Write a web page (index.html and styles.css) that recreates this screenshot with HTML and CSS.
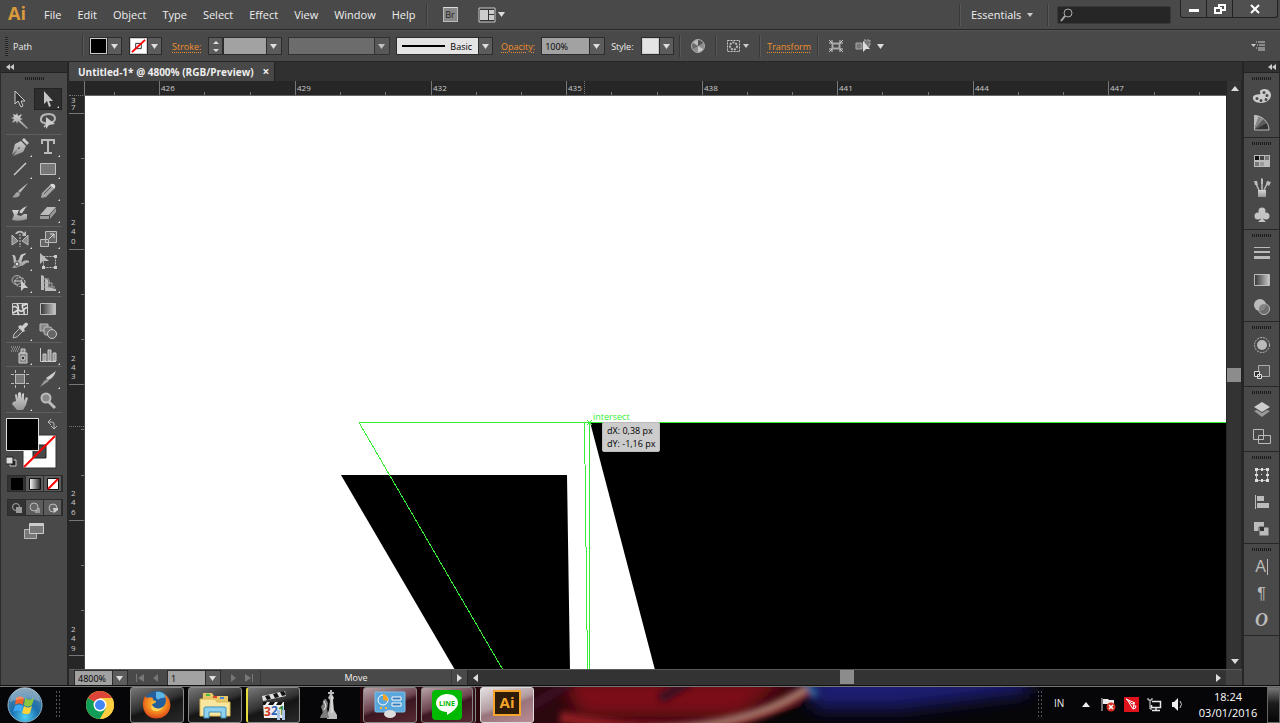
FILE: index.html
```html
<!DOCTYPE html>
<html lang="en">
<head>
    <meta charset="UTF-8">
    <meta name="viewport" content="width=device-width, initial-scale=1.0">
    <title>Untitled-1* @ 4800% (RGB/Preview)</title>
    <link rel="stylesheet" href="styles.css">
</head>
<body>
    <!-- shared gradients -->
    <svg class="defs" aria-hidden="true">
        <defs>
            <linearGradient id="metal" x1="0" y1="0" x2="0" y2="1"><stop offset="0" stop-color="#d6d6d6"/><stop offset="1" stop-color="#969696"/></linearGradient>
            <linearGradient id="fade"><stop offset="0" stop-color="#333"/><stop offset="1" stop-color="#ccc"/></linearGradient>
            <linearGradient id="fade-light"><stop offset="0" stop-color="#fff"/><stop offset="1" stop-color="#222"/></linearGradient>
            <radialGradient id="orb" cx=".5" cy=".85" r=".8"><stop offset="0" stop-color="#4fd0f5"/><stop offset=".5" stop-color="#1a6fae"/><stop offset="1" stop-color="#5a86a4"/></radialGradient>
            <radialGradient id="fox" cx=".5" cy=".4" r=".6"><stop offset="0" stop-color="#ffd23c"/><stop offset=".6" stop-color="#f5861f"/><stop offset="1" stop-color="#d9461a"/></radialGradient>
            <filter id="soft" x="-20%" y="-50%" width="140%" height="200%"><feGaussianBlur stdDeviation="3"/></filter>
            <filter id="softer" x="-30%" y="-100%" width="160%" height="300%"><feGaussianBlur stdDeviation="9"/></filter>
        </defs>
    </svg>

    <header class="menubar">
        <span class="logo">Ai</span>
        <nav class="menus">
            <button>File</button>
            <button>Edit</button>
            <button>Object</button>
            <button>Type</button>
            <button>Select</button>
            <button>Effect</button>
            <button>View</button>
            <button>Window</button>
            <button>Help</button>
        </nav>
        <i class="vsep"></i>
        <button class="bridge" aria-label="Bridge">Br</button>
        <button class="arrange" aria-label="Arrange documents">
            <svg width="28" height="16" viewBox="0 0 28 16"><path d="M1 1h16v14H1z" fill="#333" stroke="#ccc"/><path d="M2 3h8v10H2zM11 3h5v4h-5zM11 8h5v5h-5z" fill="#ccc"/><path d="M20 5h7l-3.500 5z" fill="#ddd"/></svg>
        </button>
        <span class="spacer"></span>
        <i class="vsep"></i>
        <select class="workspace-select" aria-label="Workspace"><option>Essentials</option></select>
        <i class="vsep"></i>
        <label class="search">
            <svg width="14" height="14" viewBox="0 0 14 14" fill="none" stroke="#aaa"><circle cx="8" cy="5" r="4"/><path d="M5 8l-4 5" stroke-width="2"/></svg>
            <input type="text" aria-label="Search">
        </label>
        <div class="window-buttons">
            <button aria-label="Minimize"><svg width="10" height="10" viewBox="0 0 10 10"><path d="M0 5h10v3H0z" fill="#fff"/></svg></button>
            <button aria-label="Restore"><svg width="12" height="10" viewBox="0 0 12 10" fill="none" stroke="#fff" stroke-width="2"><path d="M5 3V1h6v5H8M1 4h6v5H1z"/></svg></button>
            <button class="close" aria-label="Close"><svg width="10" height="10" viewBox="0 0 10 10" stroke="#fff" stroke-width="2"><path d="M1 1l8 8M9 1l-8 8"/></svg></button>
        </div>
    </header>

    <section class="control-bar">
        <i class="grip-v"></i>
        <span class="selection">Path</span>
        <i class="vsep"></i>
        <button class="swatch-combo" aria-label="Fill"><span class="swatch black"></span><span class="caret"></span></button>
        <button class="swatch-combo stroke-combo" aria-label="Stroke color">
            <svg class="swatch" viewBox="0 0 16 16" preserveAspectRatio="none"><path d="M0 0h16v16H0z" fill="#fff"/><path d="M5 5h6v6H5z" fill="none" stroke="#222"/><path d="M1 15L15 1" stroke="#f00" stroke-width="2"/></svg>
            <span class="caret"></span>
        </button>
        <a class="link stroke-link" href="#">Stroke:</a>
        <div class="stepper"><button aria-label="Increase"><i class="tri up"></i></button><button aria-label="Decrease"><i class="tri down"></i></button></div>
        <select class="combo weight" aria-label="Stroke weight"><option></option></select>
        <select class="combo profile" aria-label="Width profile" disabled><option></option></select>
        <button class="brush" aria-label="Brush definition"><i></i><span>Basic</span><span class="caret"></span></button>
        <a class="link" href="#">Opacity:</a>
        <select class="combo opacity" aria-label="Opacity"><option>100%</option></select>
        <span class="style-label">Style:</span>
        <button class="swatch-combo" aria-label="Graphic style"><span class="swatch light"></span><span class="caret"></span></button>
        <i class="vsep"></i>
        <button class="bar-icon" aria-label="Recolor artwork">
            <svg width="16" height="16" viewBox="0 0 16 16"><circle cx="8" cy="8" r="6.500" fill="#8d8d8d" stroke="#aaa"/><path d="M8 8V2a6 6 0 0 1 5 3z" fill="#555"/><path d="M8 8L3 5a6 6 0 0 1 5-3z" fill="#bbb"/><path d="M8 8l5 3a6 6 0 0 1-5 3z" fill="#ccc"/><path d="M8 8l-5 3a6 6 0 0 1 0-6z" fill="#6a6a6a"/></svg>
        </button>
        <i class="vsep"></i>
        <button class="bar-icon" aria-label="Align to selection">
            <svg width="24" height="16" viewBox="0 0 24 16"><path d="M1.500 2.500h12v11h-12z" fill="none" stroke="#ccc" stroke-dasharray="2 1"/><circle cx="7.500" cy="8" r="3.500" fill="none" stroke="#bbb" stroke-width="2" stroke-dasharray="2 1"/><path d="M17 6h6l-3 4z" fill="#ccc"/></svg>
        </button>
        <i class="vsep"></i>
        <a class="link" href="#">Transform</a>
        <i class="vsep"></i>
        <button class="bar-icon" aria-label="Isolate">
            <svg width="16" height="14" viewBox="0 0 16 14" fill="none" stroke="#ccc"><path d="M4.500 4.500h7v5h-7z" stroke-width="2" stroke="#aaa"/><path d="M1 1l3 3M15 1l-3 3M1 13l3-3M15 13l-3-3M1 4h3V1M15 4h-3V1M1 10h3v3M15 10h-3v3"/></svg>
        </button>
        <button class="bar-icon" aria-label="Select similar">
            <svg width="30" height="16" viewBox="0 0 30 16"><path d="M1 5h6v6H1z" fill="#777" stroke="#aaa"/><path d="M9 2h6v6H9z" fill="#777" stroke="#aaa" stroke-dasharray="2 1"/><path d="M8 3v11l3-3h4z" fill="#ddd"/><path d="M22 6h7l-3.500 5z" fill="#ddd"/></svg>
        </button>
        <span class="spacer"></span>
        <button class="bar-icon" aria-label="Panel menu">
            <svg width="14" height="10" viewBox="0 0 14 10"><path d="M0 3h5L2.500 6z" fill="#ccc"/><path d="M5 1h1M7 1h7M6 4h1M8 4h6M5 7h1M7 7h7M7 9h7" stroke="#ccc"/></svg>
        </button>
    </section>

    <main class="workspace">
        <aside class="tools">
            <button class="collapse" aria-label="Collapse"><svg width="8" height="6" viewBox="0 0 8 6"><path d="M4 0v6L0 3zM8 0v6L4 3z" fill="#ccc"/></svg></button>
            <i class="grip"></i>
            <div class="tool-group first">
                <button aria-label="Selection"><svg viewBox="0 0 18 18"><path d="M4 1v13l3-3 3 6 2-1-2-5h4z" fill="#333" stroke="#ccc"/></svg></button>
                <button class="active more" aria-label="Direct selection"><svg viewBox="0 0 18 18"><path d="M5 1v13l3-3 2 6 2-1-2-5h4z" fill="#c4c4c4"/></svg></button>
                <button aria-label="Magic wand"><svg viewBox="0 0 18 18"><path d="M6 1l1 3 4-2-2 4 3 1-3 1 8 8-1 1-9-8-1 3-1-3-4 2 2-4-3-1 3-1-1-3 3 1z" fill="url(#metal)"/></svg></button>
                <button aria-label="Lasso"><svg viewBox="0 0 18 18"><path d="M4 11C1 9 1 4 6 2.500s10 0 10 4c0 2-2 4-4 4M4 11c3-1 4 2 1 4" fill="none" stroke="#b4b4b4" stroke-width="2"/><path d="M7 5v12l3-4 6-1z" fill="#ccc"/></svg></button>
            </div>
            <div class="tool-group">
                <button class="more" aria-label="Pen"><svg viewBox="0 0 18 18"><path fill-rule="evenodd" d="M13 0l5 5-2 2-5-5zM10 3l5 5-3 6-10 4 5-7 1 0 1-1-1-1-1 1 0 1-6 6L4 6z" fill="url(#metal)"/></svg></button>
                <button class="more" aria-label="Type"><svg viewBox="0 0 18 18"><path d="M2 2h14M3 1v5M15 1v5M9 2v13M5 15h8" fill="none" stroke="#bbb" stroke-width="2"/></svg></button>
                <button class="more" aria-label="Line segment"><svg viewBox="0 0 18 18"><path d="M3 15L15 3" stroke="#ccc" stroke-width="1.500"/></svg></button>
                <button class="more" aria-label="Rectangle"><svg viewBox="0 0 18 18"><path d="M1.500 3.500h15v11h-15z" fill="#777" stroke="#c4c4c4"/></svg></button>
                <button aria-label="Paintbrush"><svg viewBox="0 0 18 18"><path d="M17 1l-8 10-2-2zM7 10l2 2c-1 4-5 4-8 3 3-1 3-5 6-5z" fill="url(#metal)"/></svg></button>
                <button class="more" aria-label="Pencil"><svg viewBox="0 0 18 18"><path d="M2 16l1-5 8-8 4 4-8 8z" fill="#a5a5a5"/><path d="M12 2a3 3 0 0 1 4 4l-1 1-4-4z" fill="#ddd"/><path d="M5 12l7-7" stroke="#555"/></svg></button>
                <button aria-label="Blob brush"><svg viewBox="0 0 18 18"><path d="M1 6h7l-2 5 4 1 3-2h3v5c-5 2-10 2-15 1l2-5z" fill="url(#metal)"/><path d="M17 1l-6 9-3-1c0-4 5-6 9-8z" fill="#ccc" stroke="#484848"/></svg></button>
                <button class="more" aria-label="Eraser"><svg viewBox="0 0 18 18"><path d="M8 3h9l-7 8H1z" fill="#bbb"/><path d="M1 12h9v3H1zM11 11l6-7v4l-6 7z" fill="#999"/></svg></button>
            </div>
            <div class="tool-group">
                <button class="more" aria-label="Reflect"><svg viewBox="0 0 18 18"><path d="M1 5v10l6-4zM17 5v10l-6-4z" fill="#888" stroke="#bbb"/><path d="M9 4v13" stroke="#ccc" stroke-dasharray="2 1"/><path d="M4 4c2-4 7-4 9-1l2-2v5h-4l1-2c-2-2-4-2-6 0z" fill="#bbb"/></svg></button>
                <button class="more" aria-label="Scale"><svg viewBox="0 0 18 18"><path d="M6.500 1.500h11v11h-11zM1.500 9.500h8v7h-8z" fill="#666" stroke="#bbb"/><path d="M10 9l5-5M11 4h4v4" fill="none" stroke="#ddd"/></svg></button>
                <button class="more" aria-label="Width"><svg viewBox="0 0 18 18"><path d="M1 3c5-1 3 5 5 6 3 0 2-7 6-7l3-1-1 2c-3 0-2 5-4 7 3 0 4-3 8-1v2c-3-2-4 3-8 3-2 0-3 2-7 2H1l3-4C1 10 4 6 1 3z" fill="url(#metal)"/><circle cx="6" cy="12" r="2" fill="#ddd" stroke="#444"/></svg></button>
                <button aria-label="Free transform"><svg viewBox="0 0 18 18"><path d="M4.500 4.500h12v11h-12z" fill="none" stroke="#bbb" stroke-dasharray="2 1"/><path d="M15 3h3v3h-3zM15 14h3v3h-3zM3 14h3v3H3z" fill="#ccc"/><path d="M1 1v11l3-3h6z" fill="#bbb"/></svg></button>
                <button class="more" aria-label="Shape builder"><svg viewBox="0 0 18 18"><ellipse cx="6" cy="6" rx="5" ry="4.500" fill="#555" stroke="#aaa"/><ellipse cx="9" cy="8" rx="5" ry="4.500" fill="none" stroke="#ccc" stroke-dasharray="2 1"/><path d="M3 7h8" stroke="#ccc"/><path d="M10 6v11l3-3h4z" fill="#ccc"/></svg></button>
                <button class="more" aria-label="Perspective grid"><svg viewBox="0 0 18 18"><path d="M2 1l3 1v14H2zM6 4l3 2v7l8 2v2H6z" fill="#bbb"/><path d="M10 6v6M13 9v4M3 5h7M3 9h10M3 13h13" stroke="#aaa"/></svg></button>
            </div>
            <div class="tool-group tight">
                <button aria-label="Mesh"><svg viewBox="0 0 18 18"><path d="M1.500 3.500h15v11h-15z" fill="#555" stroke="#ccc"/><path d="M2 7c5-3 5 6 9 4s2-4 6-3M6 4c4 4-2 7 2 11M12 4c-3 4 3 6 1 11M2 13l5-3M11 6l5-2" fill="none" stroke="#ddd" stroke-width="1.500"/></svg></button>
                <button aria-label="Gradient"><svg viewBox="0 0 18 18"><path d="M1.500 3.500h15v11h-15z" fill="url(#fade)" stroke="#bbb"/></svg></button>
                <button class="more" aria-label="Eyedropper"><svg viewBox="0 0 18 18"><path d="M2 16l1-4 6-6 3 3-6 6z" fill="#555" stroke="#bbb"/><path d="M9 3l2 1 3-3c3-1 4 2 2 3l-3 3 1 2-2 1-5-5z" fill="#ccc"/></svg></button>
                <button aria-label="Blend"><svg viewBox="0 0 18 18"><path d="M1 2h8v7H1z" fill="#888" stroke="#bbb"/><rect x="5" y="5" width="8" height="8" rx="2" fill="#777" stroke="#bbb"/><circle cx="13" cy="12" r="4.500" fill="#666" stroke="#ccc"/></svg></button>
            </div>
            <div class="tool-group tight">
                <button class="more" aria-label="Symbol sprayer"><svg viewBox="0 0 18 18"><path d="M8 7h8v10H8zM10 3h4v4h-4z" fill="#888" stroke="#ccc"/><circle cx="12" cy="12" r="2" fill="#333" stroke="#ddd"/><path d="M0 1h9M1 3h8M0 5h7" stroke="#bbb" stroke-dasharray="1 1"/></svg></button>
                <button class="more" aria-label="Column graph"><svg viewBox="0 0 18 18"><path d="M1.500 2v13.500H17" fill="none" stroke="#ccc"/><path d="M4 8h3v7H4zM9 4h3v11H9zM14 7h3v8h-3z" fill="#999" stroke="#ccc"/></svg></button>
            </div>
            <div class="tool-group tight">
                <button aria-label="Artboard"><svg viewBox="0 0 18 18"><path d="M4 4h10v10H4z" fill="#777"/><path d="M4.500 0v18M13.500 0v18M0 4.500h18M0 13.500h18" stroke="#bbb" stroke-dasharray="3 1 10 1 3"/></svg></button>
                <button class="more" aria-label="Slice"><svg viewBox="0 0 18 18"><path d="M17 1c-2 5-4 8-8 9L7 8z" fill="#ccc"/><path d="M8 9l2 2-9 6 4-6z" fill="#999"/></svg></button>
                <button class="more" aria-label="Hand"><svg viewBox="0 0 18 18"><path d="M5 9L4 3l1-1 1 1 1 4V1l2-1 1 1v6l1-5 2-1v8l2-4 2 1-2 7-3 5H6l-5-6 1-2z" fill="url(#metal)"/></svg></button>
                <button aria-label="Zoom"><svg viewBox="0 0 18 18"><circle cx="7" cy="6" r="4.500" fill="#888" stroke="#bbb" stroke-width="2"/><path d="M10 10l6 6" stroke="#bbb" stroke-width="3"/></svg></button>
            </div>
            <div class="tool-group color-area">
                <svg viewBox="0 0 56 56" width="56" height="56">
                    <path d="M17 19h33v33H17z" fill="#fff" stroke="#333"/><path d="M27 29h13v13H27z" fill="#484848" stroke="#222"/><path d="M18 51L49 20" stroke="#f00" stroke-width="2"/>
                    <path d="M.5 2.500h32v32H.5z" fill="#000" stroke="#ddd"/>
                    <path d="M43 6h3q2 0 2 2v4M45 3l-3 3 3 3M45 10l3 3 3-3" fill="none" stroke="#bbb"/>
                    <path d="M4 44h6v6H4z" fill="#222" stroke="#ccc"/><path d="M0 41h7v7H0z" fill="#ddd" stroke="#222"/>
                </svg>
            </div>
            <div class="mode-row">
                <button class="on" aria-label="Color"><svg viewBox="0 0 12 12"><path d="M0 0h12v12H0z" fill="#000"/></svg></button>
                <button aria-label="Gradient fill"><svg viewBox="0 0 12 12"><path d="M.5.5h11v11H.5z" fill="url(#fade-light)" stroke="#111"/></svg></button>
                <button aria-label="None"><svg viewBox="0 0 12 12"><path d="M.5.5h11v11H.5z" fill="#fff" stroke="#111"/><path d="M1 11L11 1" stroke="#f00" stroke-width="2"/></svg></button>
            </div>
            <div class="mode-row">
                <button class="on" aria-label="Draw normal"><svg viewBox="0 0 12 12"><circle cx="5" cy="5" r="3.500" fill="none" stroke="#aaa"/><path d="M5 5h6v6H5z" fill="#999"/></svg></button>
                <button aria-label="Draw behind"><svg viewBox="0 0 12 12"><path d="M6 6h5v5H6z" fill="#999"/><circle cx="5" cy="5" r="4" fill="#666" stroke="#bbb"/></svg></button>
                <button aria-label="Draw inside"><svg viewBox="0 0 12 12"><circle cx="6" cy="6" r="4" fill="#666" stroke="#bbb"/><path d="M6 6h5v2L7 11z" fill="#ccc"/></svg></button>
            </div>
            <button class="screen-mode" aria-label="Screen mode"><svg width="22" height="18" viewBox="0 0 22 18"><path d="M1.500 7.500h12v9h-12z" fill="#777" stroke="#bbb"/><path d="M6.500 1.500h14v10h-14z" fill="#777" stroke="#ccc"/><path d="M7 3h13" stroke="#ccc" stroke-width="2"/></svg></button>
        </aside>

        <section class="document">
            <div class="tabs">
                <div class="tab"><span>Untitled-1* @ 4800% (RGB/Preview)</span><button aria-label="Close tab">×</button></div>
            </div>
            <div class="view">
                <div class="ruler-corner"></div>
                <svg class="ruler ruler-h">
                    <path d="M74 0v15M210 0v15M346 0v15M481 0v15M617 0v15M752 0v15M888 0v15M1023 0v15"/>
                    <path d="M29 11v4M119 11v4M165 11v4M255 11v4M300 11v4M391 11v4M436 11v4M526 11v4M572 11v4M662 11v4M707 11v4M797 11v4M843 11v4M933 11v4M978 11v4M1069 11v4M1114 11v4"/>
                    <path d="M499 0v15" stroke-dasharray="1 1"/>
                    <text x="76" y="10">426</text><text x="212" y="10">429</text><text x="348" y="10">432</text><text x="483" y="10">435</text>
                    <text x="619" y="10">438</text><text x="754" y="10">441</text><text x="890" y="10">444</text><text x="1025" y="10">447</text>
                </svg>
                <svg class="ruler ruler-v">
                    <path d="M0 17h16M0 153h16M0 288h16M0 424h16M0 559h16"/>
                    <path d="M12 62h4M12 107h4M12 198h4M12 243h4M12 333h4M12 379h4M12 469h4M12 514h4"/>
                    <path d="M0 330h16" stroke-dasharray="1 1"/>
                    <text x="2" y="7">3</text><text x="2" y="14">7</text>
                    <text x="2" y="129">2</text><text x="2" y="138">4</text><text x="2" y="148">0</text>
                    <text x="2" y="265">2</text><text x="2" y="274">4</text><text x="2" y="283">3</text>
                    <text x="2" y="400">2</text><text x="2" y="409">4</text><text x="2" y="419">6</text>
                    <text x="2" y="536">2</text><text x="2" y="545">4</text><text x="2" y="555">9</text>
                </svg>
                <div class="artboard">
                    <svg class="artwork">
                        <path d="M256 379H482L485 574H370z"/>
                        <path d="M505 326H4000V574H570z"/>
                        <g class="guides">
                            <path d="M274 326.500H4000M504.500 326v400"/>
                            <path d="M274 326.500L418 574"/>
                            <path d="M499.500 326L502.500 574"/>
                            <path d="M502 324l5 5M507 324l-5 5"/>
                        </g>
                    </svg>
                    <span class="hint">intersect</span>
                    <div class="measure">dX: 0,38 px<br>dY: -1,16 px</div>
                </div>
                <div class="scroll-v">
                    <button aria-label="Scroll up"><i class="tri up"></i></button>
                    <i class="track"></i><i class="thumb"></i><i class="track"></i>
                    <button aria-label="Scroll down"><i class="tri down"></i></button>
                </div>
            </div>
            <footer class="status">
                <select class="combo zoom" aria-label="Zoom level"><option>4800%</option></select>
                <div class="pager">
                    <button aria-label="First artboard"><svg width="10" height="8" viewBox="0 0 10 8"><path d="M1 0h1v8H1zM9 0v8L3 4z"/></svg></button>
                    <button aria-label="Previous artboard"><svg width="10" height="8" viewBox="0 0 10 8"><path d="M7 0v8L2 4z"/></svg></button>
                </div>
                <select class="combo page" aria-label="Artboard"><option>1</option></select>
                <div class="pager">
                    <button aria-label="Next artboard"><svg width="10" height="8" viewBox="0 0 10 8"><path d="M3 0v8l5-4z"/></svg></button>
                    <button aria-label="Last artboard"><svg width="10" height="8" viewBox="0 0 10 8"><path d="M8 0h1v8H8zM1 0v8l6-4z"/></svg></button>
                </div>
                <span class="status-text">Move</span>
                <button class="status-menu" aria-label="Status menu"><i class="tri right"></i></button>
                <div class="scroll-h">
                    <button aria-label="Scroll left"><i class="tri left"></i></button>
                    <i class="track"></i><i class="thumb"></i><i class="track"></i>
                    <button aria-label="Scroll right"><i class="tri right"></i></button>
                </div>
                <i class="size-box"></i>
            </footer>
        </section>

        <aside class="dock">
            <button class="collapse" aria-label="Expand panels"><svg width="8" height="6" viewBox="0 0 8 6"><path d="M4 0v6L0 3zM8 0v6L4 3z" fill="#ccc"/></svg></button>
            <div class="panel-group">
                <i class="grip"></i>
                <button aria-label="Color"><svg viewBox="0 0 20 20"><path fill-rule="evenodd" d="M9 4c5-3 10 1 10 5s-4 8-10 8C4 17 0 14 1 11s5-2 7-3S6 6 9 4zM12 5a1.500 1.500 0 1 0 0 3 1.500 1.500 0 0 0 0-3zM15 8a1.500 1.500 0 1 0 0 3 1.500 1.500 0 0 0 0-3zM14 12a1.500 1.500 0 1 0 0 3 1.500 1.500 0 0 0 0-3zM9 13a1.500 1.500 0 1 0 0 3 1.500 1.500 0 0 0 0-3zM5 11a1.500 1.500 0 1 0 0 3 1.500 1.500 0 0 0 0-3z" fill="#ccc"/></svg></button>
                <button aria-label="Color guide"><svg viewBox="0 0 20 20"><path d="M2 17V2c8 0 15 7 15 15z" fill="#333"/><path d="M2 17V2l5 1z" fill="#bbb"/><path d="M2 17L7 3l5 3z" fill="#888"/><path d="M2 17L12 6l3 4z" fill="#5c5c5c"/><path d="M2.500 17V2.500c8 0 14.500 7 14.500 14.500z" fill="none" stroke="#bbb"/></svg></button>
            </div>
            <div class="panel-group">
                <i class="grip"></i>
                <button aria-label="Swatches"><svg viewBox="0 0 20 20"><path d="M2 4h16v12H2z" fill="#bbb"/><path d="M3 5h4v4H3z" fill="#111"/><path d="M8 5h4v4H8z" fill="#444"/><path d="M13 5h4v4h-4zM3 11h4v4H3z" fill="#777"/><path d="M8 11h4v4H8z" fill="#999"/></svg></button>
                <button aria-label="Brushes"><svg viewBox="0 0 20 20"><path d="M6 12h8v7H6z" fill="url(#metal)"/><path d="M7 12L4 6M10 12V5M12 12l3-6" stroke="#bbb" stroke-width="1.500"/><path d="M2 3l3 0 1 4-3 0zM9 0l2 1 0 5H9zM15 3l4 1-2 4-3-2z" fill="#bbb"/></svg></button>
                <button aria-label="Symbols"><svg viewBox="0 0 20 20"><g fill="#c4c4c4"><circle cx="10" cy="6" r="3.500"/><circle cx="6" cy="11" r="3.500"/><circle cx="14" cy="11" r="3.500"/><path d="M8 8h4l-1 6 3 3H6l3-3z"/></g></svg></button>
            </div>
            <div class="panel-group">
                <i class="grip"></i>
                <button aria-label="Stroke"><svg viewBox="0 0 20 20"><path d="M2 4h16v1H2zM2 8h16v2H2zM2 13h16v3H2z" fill="#bbb"/></svg></button>
                <button aria-label="Gradient panel"><svg viewBox="0 0 20 20"><path d="M2.500 4.500h15v11h-15z" fill="url(#fade)" stroke="#bbb"/></svg></button>
                <button aria-label="Transparency"><svg viewBox="0 0 20 20"><circle cx="8" cy="8" r="6" fill="#bbb"/><circle cx="12" cy="12" r="5.500" fill="#777" fill-opacity=".8" stroke="#bbb"/></svg></button>
            </div>
            <div class="panel-group">
                <i class="grip"></i>
                <button aria-label="Appearance"><svg viewBox="0 0 20 20"><circle cx="10" cy="10" r="5" fill="#bbb"/><circle cx="10" cy="10" r="7.500" fill="none" stroke="#bbb" stroke-dasharray="2 1"/></svg></button>
                <button aria-label="Graphic styles"><svg viewBox="0 0 20 20"><path d="M6.500 3.500h11v11h-11z" fill="#555" stroke="#aaa"/><path d="M2.500 9.500h5v5h-5zM5.500 12.500h4v4h-4z" fill="#333" stroke="#ddd"/></svg></button>
            </div>
            <div class="panel-group">
                <i class="grip"></i>
                <button aria-label="Layers"><svg viewBox="0 0 20 20"><path d="M10 2l8 5-8 5-8-5z" fill="#ccc"/><path d="M2 11l3-1 5 3 5-3 3 1-8 6z" fill="#999"/></svg></button>
                <button aria-label="Artboards"><svg viewBox="0 0 20 20"><path d="M1.500 2.500h10v10h-10zM6.500 8.500h12v8h-12z" fill="#484848" stroke="#bbb"/></svg></button>
            </div>
            <div class="panel-group">
                <i class="grip"></i>
                <button aria-label="Transform panel"><svg viewBox="0 0 20 20"><path d="M4.500 4.500h11v11h-11z" fill="none" stroke="#bbb"/><path d="M3 3h3v3H3zM9 3h2v3H9zM14 3h3v3h-3zM3 14h3v3H3zM9 14h2v3H9zM14 14h3v3h-3zM3 9h3v2H3zM14 9h3v2h-3zM9 9h1v1H9z" fill="#ddd"/></svg></button>
                <button aria-label="Align"><svg viewBox="0 0 20 20"><path d="M3 3h1v14H3zM5 4h7v5H5zM5 11h12v5H5z" fill="#bbb"/></svg></button>
                <button aria-label="Pathfinder"><svg viewBox="0 0 20 20"><path d="M2 3h10v9H2z" fill="#bbb"/><path d="M7 8h10v9H7z" fill="#bbb" stroke="#484848"/><path d="M8 8h4v4H8z" fill="#333"/></svg></button>
            </div>
            <div class="panel-group">
                <i class="grip"></i>
                <button class="glyph" aria-label="Character">A<i class="cursor"></i></button>
                <button class="glyph" aria-label="Paragraph">¶</button>
                <button class="glyph opentype" aria-label="OpenType">O</button>
            </div>
        </aside>
    </main>

    <footer class="taskbar">
        <svg class="wallpaper" aria-hidden="true">
            <path d="M360 0H810L800 20Q740 38 690 40H360z" fill="#2a080e"/>
            <g filter="url(#softer)">
                <path d="M560 -10H790L740 30H580z" fill="#7d1018"/>
                <path d="M800 -20H1030V6L900 22H815z" fill="#1b1f72"/>
            </g>
            <g filter="url(#soft)" fill="none">
                <path d="M530 20L570 -4M660 12l30-18" stroke="#3a0a24" stroke-width="10"/>
                <path d="M560 30Q640 46 700 40T812 0" stroke="#8c1c20" stroke-width="12"/>
                <path d="M650 44Q760 36 808 0" stroke="#a58072" stroke-width="6"/>
                <path d="M808 -4l8 14" stroke="#2c5c96" stroke-width="8"/>
            </g>
        </svg>
        <button class="start" aria-label="Start">
            <svg width="36" height="36" viewBox="0 0 36 36"><circle cx="18" cy="18" r="17" fill="url(#orb)" stroke="#8fb3c8"/><path d="M9 11c3-2 5-2 8 0l-1 7c-3-2-5-2-8 0z" fill="#f0632a"/><path d="M18 11c3 2 6 2 9 0l-2 7c-3 2-5 2-8 0z" fill="#8cc63f"/><path d="M8 19c3-2 5-2 8 0l-1 6c-3-2-6-2-9 0z" fill="#3fa9f5"/><path d="M17 19c3 2 5 2 8 0l-2 7c-3 2-5 1-8 0z" fill="#ffd23c"/><path d="M3 15a15 15 0 0 1 30 0c-8-5-20-4-30 0z" fill="#fff" opacity=".28"/></svg>
        </button>
        <i class="dots"></i>
        <button class="task pinned" aria-label="Chrome">
            <svg width="28" height="28" viewBox="0 0 28 28"><circle cx="14" cy="14" r="14" fill="#fc4"/><path d="M14 14L1.900 7A14 14 0 0 1 26.100 7H14z" fill="#db4437"/><path d="M1.900 7a14 14 0 0 0 12.100 21l6-10.500-6-3.500z" fill="#0f9d58"/><path d="M26.100 7H14l6 10.500L14 28A14 14 0 0 0 26.100 7z" fill="#ffcd40"/><circle cx="14" cy="14" r="6.500" fill="#fff"/><circle cx="14" cy="14" r="5" fill="#4285f4"/></svg>
        </button>
        <button class="task open" aria-label="Firefox">
            <svg width="30" height="30" viewBox="0 0 30 30"><circle cx="15" cy="14" r="13" fill="#245f9e"/><path d="M14 2c5-1 10 2 11 6-3-2-4 1-7 0-1 3-4 1-4-1z" fill="#5bb5e5"/><path d="M3 6l2 2c2-1 4-1 6 0-1 2 1 3 3 3 0 3-4 2-4 4 2 5 8 5 12 1 3-4 2-9 0-12 6 3 8 11 5 17-4 8-15 10-22 4C0 20 0 12 3 6z" fill="url(#fox)"/><path d="M10 15c2 4 8 5 12 1-3 6-10 7-13 2z" fill="#ffd55a"/></svg>
        </button>
        <button class="task open" aria-label="Explorer">
            <svg width="32" height="30" viewBox="0 0 32 30"><path d="M4 3h9l2 3h14v20H3z" fill="#e6c566"/><path d="M7 4h4v2H7z" fill="#4b4"/><path d="M14 6h4v2h-4z" fill="#d43"/><path d="M21 7h4v2h-4z" fill="#48d"/><path d="M1 9h15l2 3h13v14H1z" fill="#f8e6a0" stroke="#d9b650"/><path d="M5 28V18q0-1 2-1h18q2 0 2 1v10h-5v-6H10v6z" fill="#8fd0ee" stroke="#3d8fba"/></svg>
        </button>
        <button class="task open marked" aria-label="Media player">
            <svg width="30" height="30" viewBox="0 0 30 30"><path d="M4 12h21v16H5z" fill="#eee"/><path d="M3 6l23-5 1 5L4 11z" fill="#ddd"/><path d="M6 6l4-1 2 4-4 1zM14 4l4-1 2 4-4 1zM21 2l4-1 2 4-4 1zM4 12h4l-2 3H4zM11 12h5l-2 3H9zM19 12h5l-2 3h-5z" fill="#111"/><text x="5" y="26" class="num red">3</text><text x="12" y="25" class="num blue">2</text><text x="19" y="25" class="num green">1</text><path d="M18 20h3v10h-3zM23 20h3v10h-3z" fill="#aac4e6"/></svg>
        </button>
        <button class="task pinned" aria-label="Chess">
            <svg width="22" height="30" viewBox="0 0 22 30"><path d="M12 0h2v2h2v2h-2l2 4-1 2 1 10 3 5v4H9v-4l2-5 1-10-2-2 2-4h-2V2h2z" fill="#bbb"/><path d="M2 28l1-3c3-2 1-4 1-6-2-2 0-4 1-5-1-3 1-5 3-5l2 4-1 6 2 9z" fill="#7c7c7c"/><path d="M14 6v17M6 11l2 5-2 4" fill="none" stroke="#eee"/></svg>
        </button>
        <button class="task open warm" aria-label="Control panel">
            <svg width="32" height="28" viewBox="0 0 32 28"><rect x="1" y="1" width="30" height="20" rx="1" fill="#5aa7dc" stroke="#7cc0ea"/><circle cx="9" cy="9" r="5" fill="none" stroke="#fff"/><path d="M9 9V3a6 6 0 0 1 5 7z" fill="#f5a523"/><path d="M18 6h9v3h-9zM18 12h9v3h-9z" fill="#3578b4" stroke="#fff"/><path d="M6 17h2M11 17h2" stroke="#ffb734" stroke-width="2"/><ellipse cx="16" cy="23" rx="6" ry="4" fill="#ddd"/></svg>
        </button>
        <button class="task open warm stacked" aria-label="LINE">
            <svg width="30" height="30" viewBox="0 0 30 30"><rect width="30" height="30" rx="4" fill="#00b900"/><path d="M15 4c7 0 11 4 11 9 0 4-4 8-11 12v-3C9 22 4 18 4 13s5-9 11-9z" fill="#fff"/><text x="7" y="16" class="line-text">LINE</text></svg>
        </button>
        <button class="task open current" aria-label="Illustrator"><span class="ai-icon">Ai</span></button>
        <span class="spacer"></span>
        <i class="dots"></i>
        <span class="lang">IN</span>
        <button class="tray" aria-label="Show hidden icons"><i class="tri up"></i></button>
        <button class="tray" aria-label="Action center"><svg width="15" height="15" viewBox="0 0 15 15"><path d="M1 1v13" stroke="#ddd"/><path d="M2 2h5l1 1h5v5H7L6 7H2z" fill="#eee"/><circle cx="10" cy="10" r="4.500" fill="#d32f20"/><path d="M8 8l4 4M12 8l-4 4" stroke="#fff" stroke-width="1.500"/></svg></button>
        <button class="tray" aria-label="Antivirus"><svg width="15" height="15" viewBox="0 0 15 15"><path d="M0 0h15v15H0z" fill="#e0131c"/><path d="M2 2l9 4-3 1zM4 4l5 8 1-5M9 12q3 0 3-3h-3" fill="none" stroke="#fff"/></svg></button>
        <button class="tray" aria-label="Network"><svg width="15" height="15" viewBox="0 0 15 15" fill="none" stroke="#e6e6e6"><path d="M5 4.500h8.500v6H4.500V8M9 11v2M5 13.500h8" stroke-width="1.500"/><path d="M1 1v2h4V1M3 3v9h2"/></svg></button>
        <button class="tray" aria-label="Volume"><svg width="15" height="15" viewBox="0 0 15 15"><path d="M2 5h2l4-4v13l-4-4H2z" fill="#eee"/><path d="M10 4q3 3 0 7" fill="none" stroke="#ccc"/></svg></button>
        <div class="clock"><time>18:24</time><time>03/01/2016</time></div>
        <button class="show-desktop" aria-label="Show desktop"></button>
    </footer>
</body>
</html>
```
FILE: styles.css
```css
* {
	margin: 0;
	padding: 0;
	box-sizing: border-box;
}
body {
	height: 100vh;
	display: flex;
	flex-direction: column;
	overflow: hidden;
	background-color: #262626;
	color: #eee;
	font-family: "Open Sans", "Noto Sans", sans-serif;
	font-size: 9px;
}
button,
select,
input {
	border: none;
	background: none;
	color: inherit;
	font: inherit;
	outline: none;
}
select {
	appearance: none;
}
button {
	cursor: pointer;
}
svg {
	display: block;
	flex: none;
}
i {
	display: block;
	flex: none;
}
.defs {
	position: absolute;
	width: 0;
	height: 0;
}
.spacer {
	flex: 1;
}
.vsep {
	width: 2px;
	height: 22px;
	background-color: #383838;
	border-right: 1px solid #585858;
}
.tri {
	width: 0;
	height: 0;
	border: 4px solid transparent;
}
.tri.up {
	border-top: none;
	border-bottom: 5px solid #ddd;
}
.tri.down {
	border-bottom: none;
	border-top: 5px solid #ddd;
}
.tri.left {
	border-left: none;
	border-right: 5px solid #ddd;
}
.tri.right {
	border-right: none;
	border-left: 5px solid #ddd;
}

/* menu bar */
.menubar {
	height: 30px;
	flex: none;
	display: flex;
	align-items: center;
	background-color: #494949;
	border-bottom: 1px solid #262626;
}
.logo {
	width: 36px;
	padding-left: 8px;
	color: #d99a3c;
	font: bold 18px "Open Sans", sans-serif;
	line-height: 26px;
	align-self: flex-start;
}
.menus {
	display: flex;
	font-size: 11px;
}
.menus button {
	padding: 0 8px;
}
.menubar > .vsep {
	margin: 0 2px;
}
.bridge {
	width: 15px;
	height: 15px;
	margin: 0 20px 0 13px;
	background-color: #888;
	border: 1px solid #bbb;
	border-top-color: #ddd;
	color: #222;
	line-height: 12px;
}
.workspace-select {
	width: 66px;
	margin: 0 8px;
	font-size: 11px;
	background: url("data:image/svg+xml,%3Csvg xmlns='http://www.w3.org/2000/svg' width='6' height='4'%3E%3Cpath d='M0 0h6L3 4z' fill='%23ccc'/%3E%3C/svg%3E") no-repeat right 4px center;
}
.search {
	width: 114px;
	height: 18px;
	display: flex;
	align-items: center;
	margin-left: 6px;
	padding: 0 2px;
	background-color: #262626;
	border: 1px solid #383838;
	border-radius: 2px;
}
.search input {
	flex: 1;
	min-width: 0;
}
.window-buttons {
	display: flex;
	align-self: flex-start;
	height: 18px;
	margin: 0 2px 0 9px;
	background-color: #505050;
	border: 1px solid #222;
	border-top: none;
	border-radius: 0 0 3px 3px;
}
.window-buttons button {
	width: 26px;
	display: flex;
	align-items: center;
	justify-content: center;
	border-right: 1px solid #222;
}
.window-buttons .close {
	width: 44px;
	border-right: none;
}

/* control bar */
.control-bar {
	height: 32px;
	flex: none;
	display: flex;
	align-items: center;
	padding: 0 15px 0 5px;
	background-color: #494949;
	border-top: 1px solid #555;
	border-bottom: 1px solid #262626;
}
.grip-v {
	width: 3px;
	height: 19px;
	background: repeating-linear-gradient(#222 0 1px, #555 1px 2px);
}
.selection {
	width: 74px;
	padding-left: 5px;
}
.swatch-combo {
	display: flex;
	height: 18px;
	margin-left: 5px;
	border: 1px solid #2c2c2c;
}
.stroke-combo {
	margin-left: 7px;
}
.swatch {
	width: 17px;
	height: 16px;
	border: 1px solid #ccc;
}
.swatch.black {
	background-color: #000;
}
.swatch.light {
	background-color: #e4e4e4;
}
.caret {
	width: 14px;
	height: 16px;
	border-left: 1px solid #2c2c2c;
	background: #5c5c5c url("data:image/svg+xml,%3Csvg xmlns='http://www.w3.org/2000/svg' width='7' height='5'%3E%3Cpath d='M0 0h7L3.500 5z' fill='%23ddd'/%3E%3C/svg%3E") no-repeat center;
}
.link {
	color: #f0902e;
	text-decoration: underline dotted;
	text-underline-offset: 2px;
}
.stroke-link {
	width: 36px;
	margin-left: 10px;
}
.stepper {
	width: 15px;
	height: 18px;
	display: flex;
	flex-direction: column;
	border: 1px solid #2c2c2c;
}
.stepper button {
	flex: 1;
	display: flex;
	align-items: center;
	justify-content: center;
	background-color: #5c5c5c;
}
.stepper .tri {
	border-width: 3px;
}
.stepper .up {
	border-top-width: 0;
}
.stepper .down {
	border-bottom-width: 0;
}
.combo {
	height: 18px;
	padding: 0 16px 0 3px;
	border: 1px solid #2c2c2c;
	color: #000;
	background: url("data:image/svg+xml,%3Csvg xmlns='http://www.w3.org/2000/svg' width='15' height='18'%3E%3Cpath d='M0 0h15v18H0z' fill='%235c5c5c'/%3E%3Cpath d='M0 0h1v18H0z' fill='%232c2c2c'/%3E%3Cpath d='M4 7h7l-3.500 5z' fill='%23ddd'/%3E%3C/svg%3E") no-repeat right center #a2a2a2;
}
.weight {
	width: 59px;
}
.profile {
	width: 102px;
	margin: 0 6px;
	background-color: #757575;
	opacity: .8;
}
.brush {
	width: 97px;
	height: 18px;
	display: flex;
	align-items: center;
	margin-right: 8px;
	border: 1px solid #2c2c2c;
	background-color: #e4e4e4;
	color: #000;
}
.brush i {
	flex: 1;
	height: 2px;
	margin: 0 5px;
	background-color: #000;
}
.brush span {
	margin-left: auto;
}
.brush .caret {
	margin-left: 6px;
}
.opacity {
	width: 64px;
	margin: 0 6px;
}
.style-label {
	width: 25px;
}
.control-bar > .swatch-combo + .vsep {
	margin-left: 5px;
}
.bar-icon {
	margin: 0 9px;
}
.bar-icon + .bar-icon {
	margin-left: 2px;
}
.control-bar > .vsep + .link {
	margin: 0 6px;
}
.control-bar > .bar-icon:last-child {
	margin-right: 0;
}

/* workspace */
.workspace {
	flex: 1;
	min-height: 0;
	display: flex;
	gap: 2px;
}
.collapse {
	height: 11px;
	flex: none;
	display: flex;
	align-items: center;
	padding: 0 5px;
	background-color: #303030;
	border-bottom: 1px solid #222;
}
.grip {
	width: 19px;
	height: 3px;
	align-self: center;
	background: repeating-linear-gradient(90deg, #1c1c1c 0 1px, #484848 1px 2px);
}
.tools {
	width: 67px;
	flex: none;
	display: flex;
	flex-direction: column;
	background-color: #494949;
	border-left: 1px solid #2c2c2c;
}
.tools > .grip {
	margin: 4px 0 7px;
}
.tool-group {
	display: grid;
	grid-template-columns: 28px 28px;
	grid-auto-rows: 22px;
	margin: 0 5px;
	padding: 1px 0 2px;
	border-top: 1px solid #5e5e5e;
}
.tool-group.first {
	border-top: none;
}
.tool-group.tight {
	padding-bottom: 0;
}
.tool-group button {
	position: relative;
	display: flex;
	align-items: center;
	justify-content: center;
}
.tool-group button svg {
	width: 18px;
	height: 18px;
}
.tool-group .active {
	background-color: #2e2e2e;
	border: 1px solid #222;
}
.more::after {
	content: "";
	position: absolute;
	right: 2px;
	bottom: 1px;
	border: 1px solid transparent;
	border-right-color: #ddd;
	border-bottom-color: #ddd;
}
.tool-group.color-area {
	display: block;
	padding-top: 3px;
}
.mode-row {
	display: flex;
	height: 17px;
	margin: 1px 4px 6px 6px;
	border: 1px solid #2c2c2c;
}
.mode-row button {
	flex: 1;
	display: flex;
	align-items: center;
	justify-content: center;
	background-color: #5c5c5c;
	border-right: 1px solid #2c2c2c;
}
.mode-row .on {
	background-color: #333;
}
.mode-row svg {
	width: 12px;
	height: 12px;
}
.screen-mode {
	align-self: center;
}

/* document */
.document {
	flex: 1;
	min-width: 0;
	display: flex;
	flex-direction: column;
}
.tabs {
	height: 19px;
	flex: none;
	display: flex;
	background-color: #303030;
}
.tab {
	display: flex;
	align-items: center;
	gap: 9px;
	padding: 0 5px 0 9px;
	background-color: #484848;
	border-right: 1px solid #222;
	font-weight: bold;
	font-size: 10px;
}
.tab button {
	font-size: 12px;
	line-height: 12px;
}
.view {
	flex: 1;
	min-height: 0;
	display: grid;
	grid-template-columns: 16px 1fr 16px;
	grid-template-rows: 15px 1fr;
}
.ruler-corner {
	background-color: #262626;
	border-right: 1px solid #777;
	border-bottom: 1px dotted #777;
}
.ruler {
	width: 100%;
	height: 100%;
	min-width: 0;
	min-height: 0;
	background-color: #262626;
	stroke: #777;
	shape-rendering: crispEdges;
}
.ruler text {
	fill: #ccc;
	stroke: none;
	font-size: 8px;
}
.ruler-h {
	border-bottom: 1px solid #666;
}
.ruler-v {
	grid-row: 2;
	grid-column: 1;
	border-right: 1px solid #444;
}
.artboard {
	position: relative;
	grid-row: 2;
	grid-column: 2;
	overflow: hidden;
	background-color: #fff;
}
.artwork {
	position: absolute;
	width: 100%;
	height: 100%;
}
.guides {
	fill: none;
	stroke: #36ee36;
	shape-rendering: crispEdges;
}
.hint {
	position: absolute;
	left: 508px;
	top: 315px;
	color: #36ee36;
	line-height: 11px;
}
.measure {
	position: absolute;
	left: 517px;
	top: 326px;
	padding: 1px 4px;
	background-color: #ccc;
	border: 1px solid #bbb;
	border-radius: 2px;
	color: #000;
	line-height: 13px;
	white-space: nowrap;
}
.scroll-v {
	grid-row: 1 / 3;
	grid-column: 3;
	display: flex;
	flex-direction: column;
	background-color: #333;
	border-left: 1px solid #262626;
	border-right: 1px solid #262626;
}
.scroll-v button,
.scroll-h button {
	width: 15px;
	height: 15px;
	flex: none;
	display: flex;
	align-items: center;
	justify-content: center;
}
.track {
	flex: 1;
}
.thumb {
	width: 14px;
	height: 14px;
	background-color: #8c8c8c;
}
.status {
	height: 16px;
	flex: none;
	display: flex;
	align-items: stretch;
	padding-left: 5px;
	background-color: #494949;
	border-top: 1px solid #5a5a5a;
}
.status .combo {
	height: 15px;
	border-bottom: none;
}
.zoom,
.page {
	width: 54px;
}
.pager {
	width: 39px;
	display: flex;
	align-items: center;
	justify-content: center;
	gap: 6px;
}
.pager svg {
	fill: #777;
}
.status-text {
	width: 191px;
	border-left: 1px solid #383838;
	text-align: center;
	line-height: 15px;
}
.status-menu {
	width: 17px;
	display: flex;
	align-items: center;
	justify-content: center;
	border-left: 1px solid #383838;
	border-right: 1px solid #262626;
}
.scroll-h {
	flex: 1;
	display: flex;
	background-color: #333;
}
.size-box {
	width: 16px;
	background-color: #424242;
}

/* dock */
.dock {
	width: 36px;
	flex: none;
	display: flex;
	flex-direction: column;
	background-color: #494949;
	border-right: 1px solid #262626;
}
.dock .collapse {
	justify-content: flex-end;
	padding: 0 3px;
}
.panel-group {
	display: flex;
	flex-direction: column;
	padding-bottom: 1px;
	border-bottom: 1px solid #262626;
}
.panel-group .grip {
	margin: 4px 0 2px;
}
.panel-group button {
	height: 27px;
	display: flex;
	align-items: center;
	justify-content: center;
}
.panel-group svg {
	width: 20px;
	height: 20px;
}
.panel-group .glyph {
	color: #bbb;
	font: 500 16px "Liberation Sans", sans-serif;
}
.cursor {
	width: 1px;
	height: 16px;
	margin-left: 1px;
	background-color: #bbb;
}
.panel-group .opentype {
	font: italic bold 18px "Liberation Serif", serif;
}

/* taskbar */
.taskbar {
	position: relative;
	height: 38px;
	flex: none;
	display: flex;
	align-items: center;
	border-top: 1px solid #111;
	box-shadow: inset 0 1px #777;
	background-color: #060507;
}
.wallpaper {
	position: absolute;
	left: 0;
	top: 1px;
	width: 100%;
	height: 36px;
}
.taskbar > :not(.wallpaper) {
	position: relative;
}
.start {
	margin: 0 12px 0 7px;
}
.dots {
	width: 7px;
	height: 29px;
	background: radial-gradient(circle, #555 0 1px, transparent 1px) 0 0 / 3px 4px;
}
.task {
	width: 54px;
	height: 36px;
	display: flex;
	align-items: center;
	justify-content: center;
	margin-right: 4px;
}
.task.open {
	border: 1px solid #888;
	border-radius: 3px;
	background: linear-gradient(160deg, #777, #333 45%, #151515 55%, #292929);
}
.dots + .pinned {
	width: 60px;
	margin: 0 0 0 8px;
}
.marked + .pinned {
	width: 59px;
	margin-right: 0;
}
.marked + .pinned svg {
	margin-right: 10px;
}
.task.marked {
	border-left: 2px solid #e8dc3c;
}
.task.warm {
	background: linear-gradient(160deg, #b8a2a8, #6d4650 45%, #3c1620 55%, #582a34);
}
.task.stacked {
	width: 52px;
	box-shadow: 2px 0 #33101a, 3px 0 #888;
	margin-right: 7px;
}
.task.current {
	background: linear-gradient(160deg, #e6e0e2, #b39ea2 45%, #99747c 55%, #b98b94);
	border-color: #ddd;
}
.ai-icon {
	width: 28px;
	height: 26px;
	margin-bottom: 4px;
	background-color: #2e1b08;
	border: 2px solid #f5a52c;
	color: #f5a52c;
	font-size: 15px;
	font-weight: bold;
	line-height: 21px;
}
.num {
	font-size: 12px;
	font-weight: bold;
}
.red {
	fill: #d03a1c;
}
.blue {
	fill: #2b63b8;
}
.green {
	fill: #2e8a3a;
}
.line-text {
	fill: #00b900;
	font-size: 7px;
	font-weight: bold;
}
.lang {
	width: 30px;
	padding: 0 0 4px 10px;
	font-size: 10px;
}
.taskbar .tri.up {
	border-bottom-color: #eee;
}
.tray {
	width: 23px;
	display: flex;
	align-items: center;
	justify-content: center;
}
.clock {
	width: 78px;
	display: flex;
	flex-direction: column;
	align-items: center;
	color: #fff;
	font-size: 11px;
	line-height: 16px;
}
.show-desktop {
	width: 13px;
	height: 36px;
	border: 1px solid #666;
	background: linear-gradient(#777, #1c1c1c 45%, #050505);
}
```
